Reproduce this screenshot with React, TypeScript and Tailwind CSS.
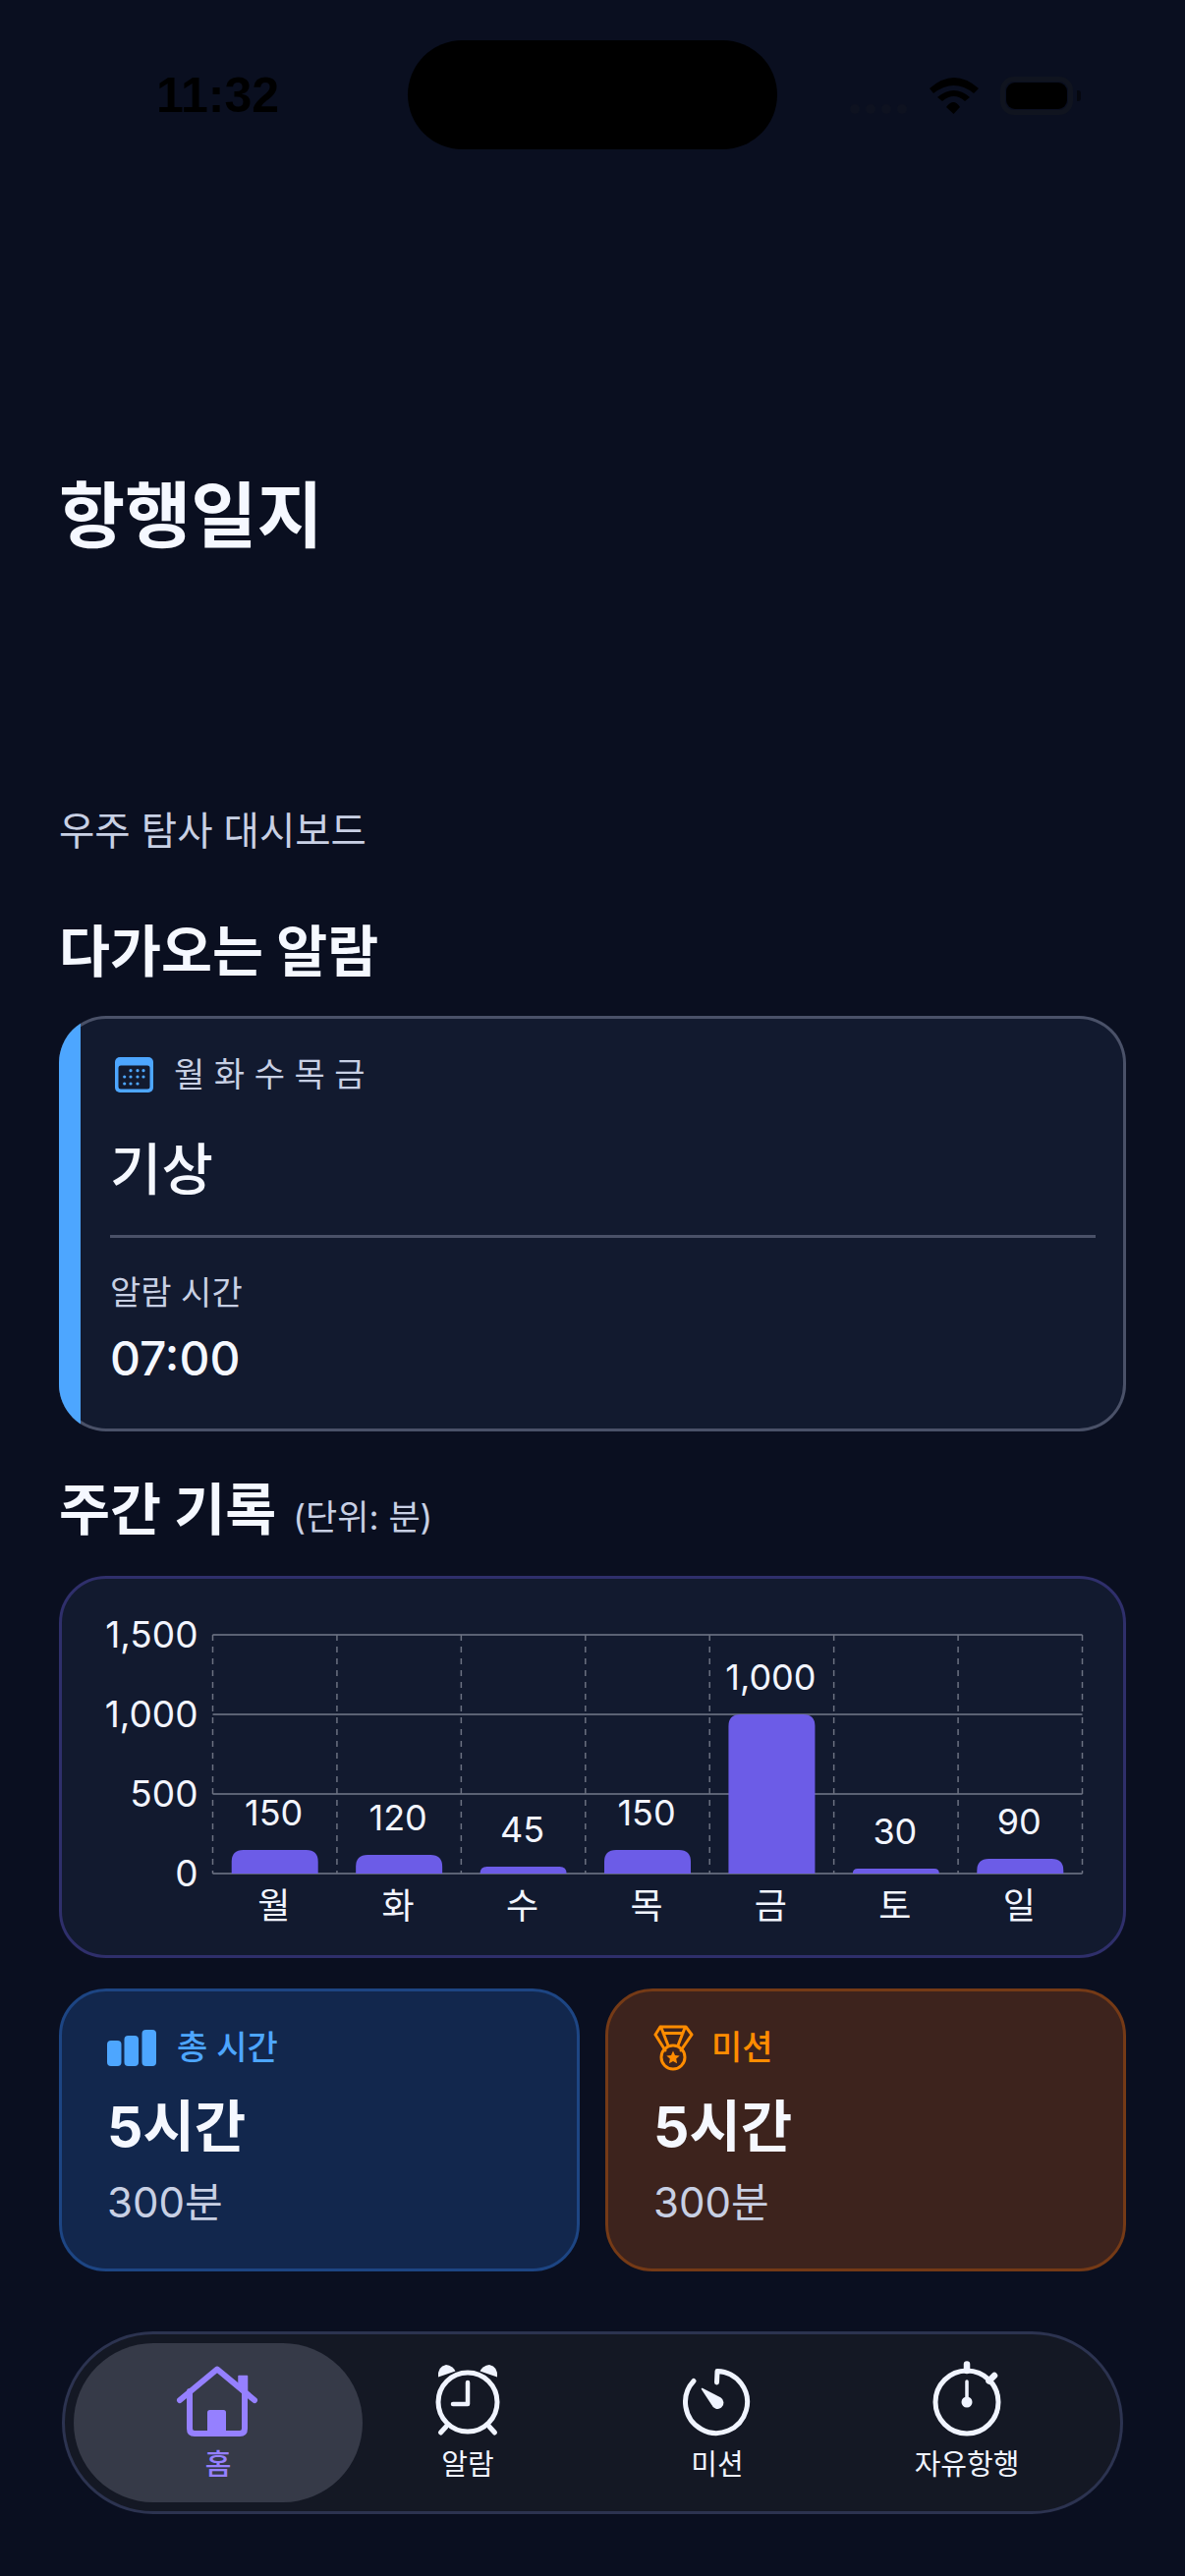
import React from "react";

const bars = [
  { d: "월", v: "150", top: 1883, base: 1858 },
  { d: "화", v: "120", top: 1888, base: 1863 },
  { d: "수", v: "45", top: 1900, base: 1875 },
  { d: "목", v: "150", top: 1883, base: 1858 },
  { d: "금", v: "1,000", top: 1745, base: 1720 },
  { d: "토", v: "30", top: 1902, base: 1877 },
  { d: "일", v: "90", top: 1892, base: 1867 },
];
const colW = 885 / 7;

function barPath(cx: number, top: number) {
  const l = cx - 44;
  const r = cx + 44;
  const b = 1907;
  const rad = Math.min(12, b - top);
  return `M${l} ${b}V${top + rad}Q${l} ${top} ${l + rad} ${top}H${r - rad}Q${r} ${top} ${r} ${top + rad}V${b}Z`;
}

function Chart() {
  return (
    <svg viewBox="64 1607 1077 383" className="block w-full h-[383px]">
      {[1664, 1745, 1826, 1907].map((y) => (
        <line key={y} x1={216} x2={1101} y1={y} y2={y} stroke="#5b6274" strokeWidth={2} />
      ))}
      {Array.from({ length: 8 }).map((_, i) => (
        <line key={i} x1={216 + i * colW} x2={216 + i * colW} y1={1664} y2={1907} stroke="#6b7181" strokeWidth={1.5} strokeDasharray="6 6" />
      ))}
      {[["1,500", 1677], ["1,000", 1758], ["500", 1839], ["0", 1920]].map(([t, y]) => (
        <text key={t} x={201} y={y as number} textAnchor="end" className="fill-[#f2f5ff] text-[37px]">{t}</text>
      ))}
      {bars.map((b, i) => {
        const cx = 216 + colW * (i + 0.5);
        return (
          <g key={b.d}>
            <path d={barPath(cx, b.top)} fill="#6c5ce7" />
            <text x={cx - 1} y={b.base} textAnchor="middle" className="fill-[#f2f5ff] text-[36px]">{b.v}</text>
            <text x={cx - 1} y={1953} textAnchor="middle" className="fill-[#f2f5ff] text-[36px]">{b.d}</text>
          </g>
        );
      })}
    </svg>
  );
}

function CalendarIcon() {
  const dots = [
    [133, 1090.7], [140, 1090.7], [146, 1090.7],
    [126.7, 1097], [133, 1097], [140, 1097], [146, 1097],
    [126.7, 1104], [133, 1104], [140, 1104],
  ];
  return (
    <svg viewBox="117 1077 39 36" className="w-[39px] h-[36px] shrink-0">
      <rect x="117" y="1077" width="39" height="36" rx="5" fill="#4da6ff" />
      <rect x="120.5" y="1085.5" width="32" height="24" rx="2.5" fill="#121a2f" />
      {dots.map(([x, y], i) => (
        <circle key={i} cx={x} cy={y} r="1.6" fill="#4da6ff" />
      ))}
    </svg>
  );
}

function BarsIcon() {
  return (
    <svg viewBox="110 2066 50 37" className="w-[50px] h-[37px] shrink-0" fill="#4da6ff">
      <rect x="110" y="2077" width="14.5" height="26" rx="4" />
      <rect x="127.5" y="2072" width="14.5" height="31" rx="4" />
      <rect x="145.5" y="2066" width="14.5" height="37" rx="4" />
    </svg>
  );
}

function MedalIcon() {
  return (
    <svg viewBox="664 2062 41 47" className="w-[41px] h-[47px] shrink-0" fill="none" stroke="#ff8c00" strokeWidth="3" strokeLinejoin="round" strokeLinecap="round">
      <path d="M671 2064H697L703 2072L692 2088M666 2072L671 2064M666 2072L676 2088" />
      <path d="M672 2065L679 2083M696 2065L689 2083M674 2070.5H694" />
      <circle cx="684" cy="2095" r="12" />
      <path d="M684 2088.5L686 2092.9L690.7 2093.4L687.2 2096.6L688.1 2101.3L684 2099L679.9 2101.3L680.8 2096.6L677.3 2093.4L682 2092.9Z" fill="#ff8c00" stroke="none" />
    </svg>
  );
}

function HomeIcon() {
  return (
    <svg viewBox="177 2403 90 80" className="w-[90px] h-[80px]" fill="none" stroke="#9580ff" strokeLinecap="round" strokeLinejoin="round">
      <path d="M183 2443L221 2411.5L259 2443" strokeWidth="6" />
      <path d="M193 2434V2472Q193 2477 198 2477H244Q249 2477 249 2472V2434" strokeWidth="6" />
      <path d="M243 2418.5H251.5V2438L243 2431Z" fill="#9580ff" stroke="#9580ff" strokeWidth="1.5" />
      <rect x="211" y="2453" width="19" height="25" rx="2.5" fill="#9580ff" stroke="none" />
    </svg>
  );
}

function AlarmIcon() {
  return (
    <svg viewBox="430 2403 90 80" className="w-[90px] h-[80px]" fill="none" stroke="#f0f4ff" strokeLinecap="round" strokeLinejoin="round">
      <circle cx="475" cy="2445" r="30" strokeWidth="5" />
      <path d="M475 2425V2447H460" strokeWidth="4.5" />
      <path d="M453 2470L447.5 2476M497 2470L502.5 2476" strokeWidth="5" />
      <path d="M445 2419.5Q444 2409 453 2407Q460 2408 462.5 2413.5Z" fill="#f0f4ff" stroke="none" />
      <path d="M505 2419.5Q506 2409 497 2407Q490 2408 487.5 2413.5Z" fill="#f0f4ff" stroke="none" />
    </svg>
  );
}

function MissionIcon() {
  return (
    <svg viewBox="684 2403 90 80" className="w-[90px] h-[80px]" fill="none" stroke="#f0f4ff" strokeLinecap="round" strokeLinejoin="round">
      <path d="M705 2423.5A31.5 31.5 0 1 0 729 2413.5L728.5 2425" strokeWidth="5" />
      <path d="M713.5 2431.5L732 2441A5.5 5.5 0 1 1 724 2447.5Z" fill="#f0f4ff" stroke="#f0f4ff" strokeWidth="1.5" />
    </svg>
  );
}

function StopwatchIcon() {
  return (
    <svg viewBox="938 2403 90 80" className="w-[90px] h-[80px]" fill="none" stroke="#f0f4ff" strokeLinecap="round" strokeLinejoin="round">
      <circle cx="983" cy="2445" r="32" strokeWidth="5" />
      <path d="M983 2406.5V2413" strokeWidth="6.5" />
      <path d="M1005.5 2423.5L1011 2418" strokeWidth="6.5" />
      <path d="M983 2424V2445" strokeWidth="3.5" />
      <circle cx="983" cy="2445" r="5.5" fill="#f0f4ff" stroke="none" />
    </svg>
  );
}

function WifiIcon() {
  return (
    <svg viewBox="946 79 50 37" className="w-[50px] h-[37px] shrink-0" fill="#000">
      <path d="M946 90Q971 68 996 90L991 95Q971 79 950 95Z" />
      <path d="M954 99Q971 85 987 99L982 103Q971 93 959 103Z" />
      <path d="M963 109Q970.5 99 977 109L970.5 116Z" />
    </svg>
  );
}

function Stat({ icon, label, labelColor, value, sub, cls, gap }: { icon: React.ReactNode; label: string; labelColor: string; value: string; sub: string; cls: string; gap: string }) {
  return (
    <div className={`h-[288px] rounded-[48px] border-[3px] pl-[46px] pt-[33px] ${cls}`}>
      <div className={`flex items-center h-[48px] ${gap}`}>
        {icon}
        <span className={`text-[34px] leading-[48px] font-medium ${labelColor}`}>{label}</span>
      </div>
      <div className="mt-[21px] text-[57px] leading-[72px] font-bold text-[#f5f8ff]">{value}</div>
      <div className="mt-[14px] text-[42px] leading-[54px] text-[#c8d0e4]">{sub}</div>
    </div>
  );
}

export default function App() {
  return (
    <div className="w-[1206px] h-[2622px] overflow-hidden bg-[#0a0f20] pt-[41px] font-[Inter,'Noto_Sans_CJK_KR',sans-serif]">
      <div className="flex items-center h-[111px] pl-[159px]">
        <div className="w-[256px] text-[50px] leading-[60px] font-bold text-black font-['Liberation_Sans',sans-serif]">11:32</div>
        <div className="w-[376px] h-[111px] rounded-[56px] bg-black" />
        <div className="flex items-center ml-[74px] h-[39px] mt-[2px]">
          <div className="flex gap-[6px] self-end mb-[1px]">
            {[0, 1, 2, 3].map((i) => (
              <div key={i} className="w-[10px] h-[10px] rounded-full bg-[#0e1220]" />
            ))}
          </div>
          <div className="ml-[23px]">
            <WifiIcon />
          </div>
          <div className="ml-[22px] w-[74px] h-[39px] rounded-[14px] border-[5px] border-[#10141f] p-[1px]">
            <div className="w-full h-full rounded-[9px] bg-black" />
          </div>
          <div className="w-[4px] h-[11px] ml-[4px] rounded-r-[3px] bg-[#05070f]" />
        </div>
      </div>

      <h1 className="ml-[60px] mt-[328px] text-[73px] leading-[90px] font-bold text-[#f5f8ff]">항행일지</h1>
      <p className="ml-[60px] mt-[246px] text-[39.5px] leading-[60px] text-[#c8d0e4]">우주 탐사 대시보드</p>
      <h2 className="ml-[60px] mt-[57px] text-[56.5px] leading-[72px] font-bold text-[#f5f8ff]">다가오는 알람</h2>

      <div className="relative mx-[60px] mt-[29px] h-[423px] overflow-hidden rounded-[48px] bg-[#121a2f] shadow-[inset_0_0_0_3px_#4a5168] pl-[52px] pr-[31px] pt-[36px]">
        <div className="absolute left-0 top-0 bottom-0 w-[22px] bg-[#4da6ff]" />
        <div className="flex items-center h-[48px] pl-[5px] gap-[21px]">
          <CalendarIcon />
          <span className="text-[34px] leading-[48px] text-[#c8d0e4]">월 화 수 목 금</span>
        </div>
        <div className="mt-[34px] text-[57px] leading-[78px] font-medium text-[#f5f8ff]">기상</div>
        <div className="mt-[27px] h-[3px] bg-[#4a5168]" />
        <div className="mt-[32px] text-[34px] leading-[48px] text-[#c8d0e4]">알람 시간</div>
        <div className="mt-[10px] text-[48px] leading-[66px] font-medium text-[#f5f8ff]">07:00</div>
      </div>

      <div className="flex items-baseline gap-[17px] ml-[60px] mt-[44px]">
        <h2 className="text-[56.5px] leading-[72px] font-bold text-[#f5f8ff]">주간 기록</h2>
        <span className="text-[35px] text-[#c8d0e4]">(단위: 분)</span>
      </div>

      <div className="mx-[60px] mt-[31px] h-[389px] rounded-[48px] border-[3px] border-[#2f2f6b] bg-[#121a2f]">
        <Chart />
      </div>

      <div className="grid grid-cols-2 gap-[26px] mx-[60px] mt-[31px]">
        <Stat cls="bg-[#12274d] border-[#1d4583]" gap="gap-[21px]" icon={<BarsIcon />} label="총 시간" labelColor="text-[#4da6ff]" value="5시간" sub="300분" />
        <Stat cls="bg-[#3d231d] border-[#753a16]" gap="gap-[18px]" icon={<MedalIcon />} label="미션" labelColor="text-[#ff8c00]" value="5시간" sub="300분" />
      </div>

      <nav className="relative mx-[63px] mt-[61px] h-[186px] rounded-[93px] border-[3px] border-[#2c3350] bg-[#141824] pl-[29px] pr-[29px] pt-[27px]">
        <div className="absolute left-[9px] top-[9px] w-[294px] h-[162px] rounded-[81px] bg-[#363a48]" />
        <div className="relative grid grid-cols-4">
          {[
            { icon: <HomeIcon />, label: "홈", color: "text-[#9580ff]", weight: "font-medium" },
            { icon: <AlarmIcon />, label: "알람", color: "text-[#f0f4ff]", weight: "" },
            { icon: <MissionIcon />, label: "미션", color: "text-[#f0f4ff]", weight: "" },
            { icon: <StopwatchIcon />, label: "자유항행", color: "text-[#f0f4ff]", weight: "" },
          ].map((t) => (
            <div key={t.label} className="flex flex-col items-center">
              {t.icon}
              <span className={`mt-[8px] text-[29px] leading-[36px] ${t.color} ${t.weight}`}>{t.label}</span>
            </div>
          ))}
        </div>
      </nav>
    </div>
  );
}
